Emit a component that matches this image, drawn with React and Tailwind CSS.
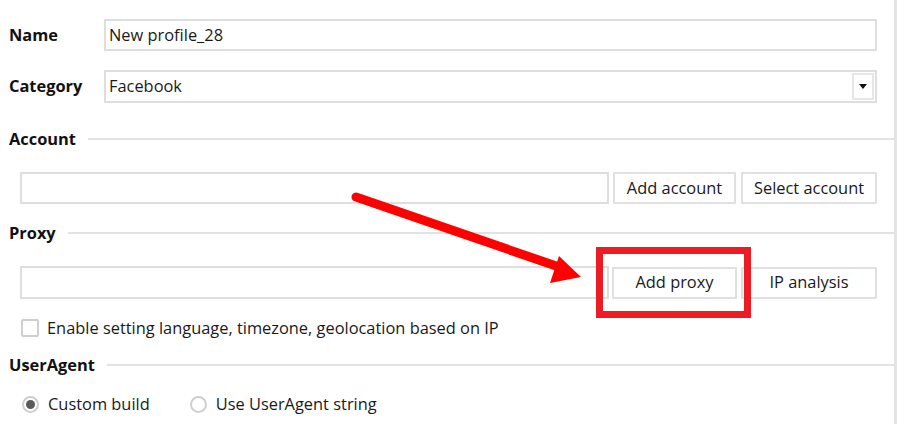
import React from "react";

function Heading({ label, className = "" }) {
  return (
    <div className={"flex items-center h-[20px] " + className}>
      <span className="font-bold text-[#111] pr-[12px]">{label}</span>
      <div className="flex-1 h-[2px] bg-[#e2e2e2]" />
    </div>
  );
}

function Btn({ children, w }) {
  return (
    <div className={"h-[32px] border-2 border-[#e0e0e0] bg-white flex items-center justify-center text-[#1a1a1a] " + w}>
      {children}
    </div>
  );
}

export default function App() {
  return (
    <div className="relative w-[897px] h-[424px] bg-white overflow-hidden font-['Open_Sans',sans-serif] text-[16.4px] leading-none text-[#1a1a1a]">
      <div className="w-[897px] h-full border-r-[3px] border-[#e4e4e4] pl-[9px] pr-[17px] pt-[19px] flex flex-col">
        <div className="flex items-center h-[32px]">
          <span className="w-[95px] font-bold text-[#111]">Name</span>
          <div className="flex-1 h-[32px] border-2 border-[#dedede] flex items-center pl-[3px]">New profile_28</div>
        </div>
        <div className="flex items-center h-[33px] mt-[19px]">
          <span className="w-[95px] font-bold text-[#111]">Category</span>
          <div className="flex-1 h-[33px] border-2 border-[#dedede] flex items-center pl-[3px]">
            <span className="flex-1">Facebook</span>
            <div className="w-[22px] h-[27px] border-2 border-[#e6e6e6] mr-[1px] flex items-center justify-center">
              <svg width="8" height="5" viewBox="0 0 8 5"><path d="M0 0h8L4 5z" fill="#111" /></svg>
            </div>
          </div>
        </div>
        <Heading label="Account" className="mt-[26px] -mr-[17px]" />
        <div className="flex items-center mt-[23px] pl-[11px]">
          <div className="flex-1 h-[32px] border-2 border-[#dedede]" />
          <div className="ml-[4px]"><Btn w="w-[123px]">Add account</Btn></div>
          <div className="ml-[5px]"><Btn w="w-[136px]">Select account</Btn></div>
        </div>
        <Heading label="Proxy" className="mt-[19px] -mr-[17px]" />
        <div className="flex items-center mt-[23px] pl-[11px]">
          <div className="flex-1 h-[33px] border-2 border-[#dedede]" />
          <div className="ml-[3px]"><Btn w="w-[125px]">Add proxy</Btn></div>
          <div className="ml-[4px]"><Btn w="w-[136px]">IP analysis</Btn></div>
        </div>
        <div className="flex items-center mt-[20px] pl-[12px] h-[18px]">
          <div className="w-[18px] h-[18px] border-2 border-[#cfcfcf] rounded-[2px] bg-white" />
          <span className="ml-[8px]">Enable setting language, timezone, geolocation based on IP</span>
        </div>
        <Heading label="UserAgent" className="mt-[18px] -mr-[17px]" />
        <div className="flex items-center mt-[20px] pl-[13px] h-[18px]">
          <div className="w-[17px] h-[17px] rounded-full border-2 border-[#cfcfcf] flex items-center justify-center">
            <div className="w-[9px] h-[9px] rounded-full bg-[#5a5a5a]" />
          </div>
          <span className="ml-[9px]">Custom build</span>
          <div className="ml-[40px] w-[17px] h-[17px] rounded-full border-2 border-[#cfcfcf]" />
          <span className="ml-[9px]">Use UserAgent string</span>
        </div>
      </div>
      <div className="absolute left-[596px] top-[247px] w-[155px] h-[71px] border-[7px] border-[#ed1c24]" />
      <svg className="absolute left-0 top-0" width="897" height="424" viewBox="0 0 897 424">
        <line x1="356" y1="197" x2="562" y2="268" stroke="#ff0000" strokeWidth="9" strokeLinecap="round" />
        <path d="M581 277 L559 256 L550 283 Z" fill="#ff0000" />
      </svg>
    </div>
  );
}
